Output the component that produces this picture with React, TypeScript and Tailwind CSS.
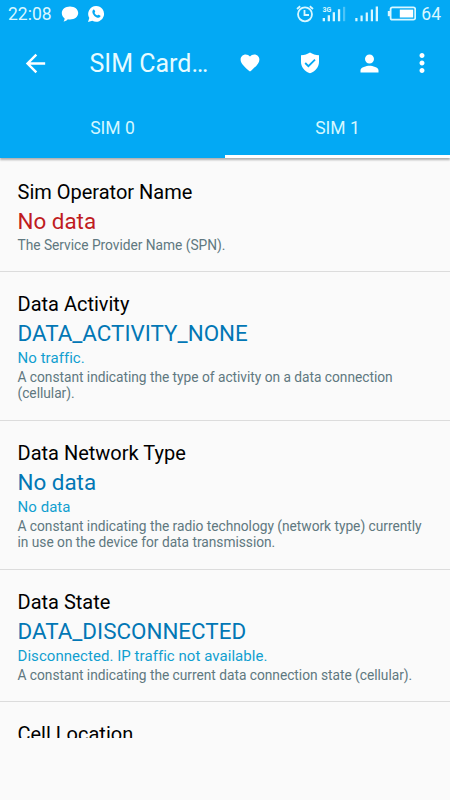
import React, { useState } from "react";
import clsx from "clsx";
import { MdArrowBack, MdMoreVert, MdPerson } from "react-icons/md";

type SimProperty = {
  title: string;
  value?: string;
  missing?: boolean;
  note?: string;
  description?: string;
};

const properties: SimProperty[] = [
  {
    title: "Sim Operator Name",
    value: "No data",
    missing: true,
    description: "The Service Provider Name (SPN).",
  },
  {
    title: "Data Activity",
    value: "DATA_ACTIVITY_NONE",
    note: "No traffic.",
    description:
      "A constant indicating the type of activity on a data connection (cellular).",
  },
  {
    title: "Data Network Type",
    value: "No data",
    note: "No data",
    description:
      "A constant indicating the radio technology (network type) currently in use on the device for data transmission.",
  },
  {
    title: "Data State",
    value: "DATA_DISCONNECTED",
    note: "Disconnected. IP traffic not available.",
    description:
      "A constant indicating the current data connection state (cellular).",
  },
  { title: "Cell Location" },
];

function StatusBar() {
  return (
    <div className="flex h-7 items-center pl-2 pr-[9px] text-[#d9f7ff]">
      <span className="text-[17.5px] leading-7">22:08</span>
      <svg className="ml-[9px]" width="18" height="18" viewBox="0 0 18 18">
        <path
          fill="#fff"
          d="M9 1.500c4.600 0 8.200 2.800 8.200 6.500s-3.600 6.500-8.200 6.500c-.8 0-1.500-.1-2.200-.3-1.100 1.400-2.500 2.100-4.300 2.200.8-1 1.200-2 1-3.200C1.800 12 .8 10.200.8 8 .8 4.300 4.400 1.500 9 1.500z"
        />
      </svg>
      <svg className="ml-2" width="18" height="18" viewBox="0 0 18 18">
        <path
          fill="#fff"
          d="M9.200 1a7.900 7.900 0 1 1-3.900 14.800L1 17l1.300-4.100A7.900 7.900 0 0 1 9.200 1z"
        />
        <path
          fill="#03a9f4"
          d="M6.200 4.800c.5-.4 1-.3 1.300.3l.7 1.500c.1.400-.4 1-.7 1.300.6 1.200 1.500 2 2.700 2.600.4-.3.900-1 1.300-.8l1.600.8c.6.400.4 1-.1 1.600-1.100 1.200-3 .8-5-.7C5.800 9.700 4.400 6.600 6.200 4.800z"
        />
      </svg>
      <div className="flex-1" />
      <svg
        width="18"
        height="18"
        viewBox="0 0 18 18"
        fill="none"
        stroke="currentColor"
        strokeWidth="1.800"
      >
        <circle cx="9" cy="9.300" r="7" />
        <path d="M8.500 5v5H13M1 4l3.200-2.800M17 4l-3.200-2.800" />
      </svg>
      <svg
        className="ml-2"
        width="26"
        height="18"
        viewBox="0 0 26 18"
        fill="currentColor"
      >
        <text x="0.500" y="7" fontSize="7" fontWeight="700">
          3G
        </text>
        <path d="M.7 13H3v3.200H.7zM5.700 10.300H8v5.900H5.700zM10.700 7.300H13v8.900h-2.300zM15.900 4.300h2.300v11.900h-2.300z" />
        <path opacity=".35" d="M21 1.800h2.200v14.400H21z" />
      </svg>
      <svg
        className="ml-[6px]"
        width="25"
        height="18"
        viewBox="0 0 25 18"
        fill="currentColor"
      >
        <path d="M1.300 13h2.200v3.200H1.300zM6.500 10.500h2.200v5.700H6.500zM11.700 7.500h2.200v8.700h-2.200zM16.800 4.500H19v11.700h-2.200zM21.700 1.500h2.300v14.700h-2.300z" />
      </svg>
      <svg className="ml-[7px]" width="30" height="18" viewBox="0 0 30 18">
        <rect
          x="4.600"
          y="2.300"
          width="24.600"
          height="12.400"
          rx="1.800"
          fill="none"
          stroke="currentColor"
          strokeWidth="1.800"
        />
        <path fill="currentColor" d="M1.800 6H4v5.200H1.800z" />
        <path fill="#fff" d="M13.800 4.600h13.400v7.900H13.800z" />
      </svg>
      <span className="ml-[5px] text-[17.5px] leading-7">64</span>
    </div>
  );
}

function Toolbar() {
  return (
    <div className="flex h-[70px] items-center text-white">
      <button className="ml-[20.5px]">
        <MdArrowBack size={29} />
      </button>
      <h1 className="ml-10 mt-[2px] w-[118px] whitespace-nowrap text-[25px] leading-8 text-[#e6fbff]">
        SIM Card…
      </h1>
      <button className="ml-[30px]">
        <svg width="24" height="24" viewBox="0 0 24 24" fill="currentColor">
          <path d="M12 20.600l-1.400-1.200C5.800 15.100 2.600 12.200 2.600 8.700c0-2.900 2.300-5.100 5.100-5.100 1.700 0 3.200.8 4.300 2 1-1.200 2.600-2 4.300-2 2.800 0 5.100 2.200 5.100 5.100 0 3.500-3.200 6.400-8 10.700z" />
        </svg>
      </button>
      <button className="ml-9">
        <svg width="24" height="24" viewBox="0 0 24 24">
          <path
            fill="currentColor"
            d="M12 1.500c2.500 1.600 5.500 2.500 9 2.800v6.500c0 5.200-3.600 9.900-9 11.400-5.400-1.500-9-6.200-9-11.400V4.300c3.500-.3 6.500-1.200 9-2.800z"
          />
          <path
            d="M7.200 12l3.200 3.200L17 8.600"
            fill="none"
            stroke="#03a9f4"
            strokeWidth="1.800"
          />
        </svg>
      </button>
      <button className="ml-[34.5px]">
        <MdPerson size={27} />
      </button>
      <button className="ml-6">
        <MdMoreVert size={30} />
      </button>
    </div>
  );
}

type TabsProps = {
  selected: number;
  onSelect: (index: number) => void;
};

function Tabs(props: TabsProps) {
  return (
    <div className="flex h-[60px]">
      {["SIM 0", "SIM 1"].map((label, index) => (
        <button
          key={label}
          onClick={() => props.onSelect(index)}
          className={clsx(
            "flex-1 border-b-[3px] pt-[4px] text-[17.5px] text-[#d4f7ff]",
            index === props.selected ? "border-white" : "border-transparent"
          )}
        >
          {label}
        </button>
      ))}
    </div>
  );
}

function PropertyItem(props: { item: SimProperty }) {
  const { title, value, missing, note, description } = props.item;
  return (
    <div className="border-b border-[#dcdcdc] px-[17.5px] pb-[18px] pt-[19px] first:pb-[17px]">
      <h2 className="text-[20px] leading-[26px] text-black">{title}</h2>
      <div
        className={clsx(
          "text-[22.4px] leading-[32px]",
          missing ? "text-[#c01c1f]" : "text-[#0277b5]"
        )}
      >
        {value}
      </div>
      {note && (
        <div className="mb-[2px] text-[15px] leading-[18px] tracking-[0.05px] text-[#119fd0]">
          {note}
        </div>
      )}
      <p className="text-[13.75px] leading-[16.500px] tracking-[-0.02px] text-[#607880]">
        {description}
      </p>
    </div>
  );
}

export default function App() {
  const [selected, setSelected] = useState(1);

  return (
    <div className="flex h-[800px] w-[450px] flex-col overflow-hidden bg-[#fafafa] font-['Roboto',sans-serif]">
      <header className="z-10 shrink-0 bg-[#03a9f4] shadow-[0_2px_2px_rgba(0,0,0,0.3)]">
        <StatusBar />
        <Toolbar />
        <Tabs selected={selected} onSelect={setSelected} />
      </header>
      <main className="h-[580px] overflow-hidden pt-[2px]">
        {properties.map((item) => (
          <PropertyItem key={item.title} item={item} />
        ))}
      </main>
    </div>
  );
}
